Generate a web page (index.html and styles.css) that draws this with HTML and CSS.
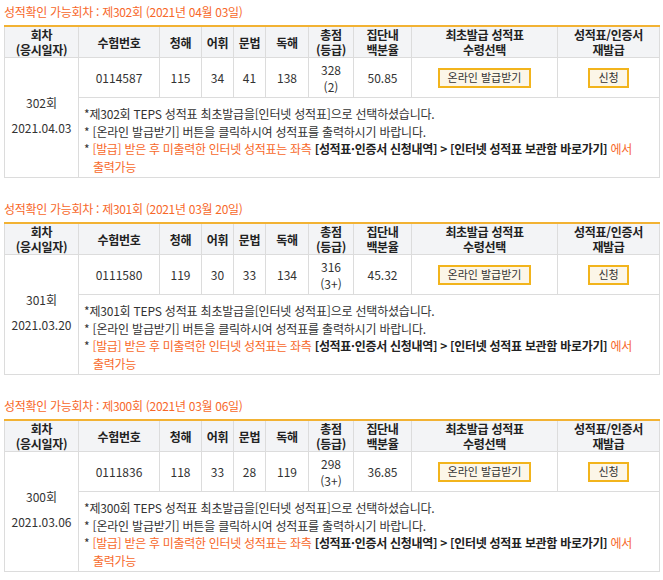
FILE: index.html
```html
<!DOCTYPE html>
<html lang="ko">
<head>
<meta charset="utf-8">
<link rel="stylesheet" href="styles.css">
</head>
<body>
<section class="block">
  <h2 class="round-title">성적확인 가능회차 : 제302회 (2021년 04월 03일)</h2>
  <table class="score">
    <colgroup>
      <col class="c-round"><col class="c-num"><col class="c-s1"><col class="c-s2"><col class="c-s3"><col class="c-s4"><col class="c-total"><col class="c-pct"><col class="c-first"><col class="c-re">
    </colgroup>
    <thead>
      <tr>
        <th>회차<br>(응시일자)</th><th>수험번호</th><th>청해</th><th>어휘</th><th>문법</th><th>독해</th><th>총점<br>(등급)</th><th>집단내<br>백분율</th><th>최초발급 성적표<br>수령선택</th><th>성적표/인증서<br>재발급</th>
      </tr>
    </thead>
    <tbody>
      <tr class="data">
        <td rowspan="2" class="round">302회<br>2021.04.03</td>
        <td>0114587</td><td>115</td><td>34</td><td>41</td><td>138</td><td>328<br>(2)</td><td>50.85</td>
        <td><button class="btn">온라인 발급받기</button></td>
        <td><button class="btn">신청</button></td>
      </tr>
      <tr class="note-row">
        <td colspan="9" class="notes">
          <p>*제302회 TEPS 성적표 최초발급을[인터넷 성적표]으로 선택하셨습니다.</p>
          <p>* [온라인 발급받기] 버튼을 클릭하시여 성적표를 출력하시기 바랍니다.</p>
          <p class="hang">* <span class="warn">[발급] 받은 후 미출력한 인터넷 성적표는 좌측 </span><b>[성적표·인증서 신청내역] &gt; [인터넷 성적표 보관함 바로가기]</b><span class="warn"> 에서 <span class="nw">출력가능</span></span></p>
        </td>
      </tr>
    </tbody>
  </table>
</section>
<section class="block">
  <h2 class="round-title">성적확인 가능회차 : 제301회 (2021년 03월 20일)</h2>
  <table class="score">
    <colgroup>
      <col class="c-round"><col class="c-num"><col class="c-s1"><col class="c-s2"><col class="c-s3"><col class="c-s4"><col class="c-total"><col class="c-pct"><col class="c-first"><col class="c-re">
    </colgroup>
    <thead>
      <tr>
        <th>회차<br>(응시일자)</th><th>수험번호</th><th>청해</th><th>어휘</th><th>문법</th><th>독해</th><th>총점<br>(등급)</th><th>집단내<br>백분율</th><th>최초발급 성적표<br>수령선택</th><th>성적표/인증서<br>재발급</th>
      </tr>
    </thead>
    <tbody>
      <tr class="data">
        <td rowspan="2" class="round">301회<br>2021.03.20</td>
        <td>0111580</td><td>119</td><td>30</td><td>33</td><td>134</td><td>316<br>(3+)</td><td>45.32</td>
        <td><button class="btn">온라인 발급받기</button></td>
        <td><button class="btn">신청</button></td>
      </tr>
      <tr class="note-row">
        <td colspan="9" class="notes">
          <p>*제301회 TEPS 성적표 최초발급을[인터넷 성적표]으로 선택하셨습니다.</p>
          <p>* [온라인 발급받기] 버튼을 클릭하시여 성적표를 출력하시기 바랍니다.</p>
          <p class="hang">* <span class="warn">[발급] 받은 후 미출력한 인터넷 성적표는 좌측 </span><b>[성적표·인증서 신청내역] &gt; [인터넷 성적표 보관함 바로가기]</b><span class="warn"> 에서 <span class="nw">출력가능</span></span></p>
        </td>
      </tr>
    </tbody>
  </table>
</section>
<section class="block">
  <h2 class="round-title">성적확인 가능회차 : 제300회 (2021년 03월 06일)</h2>
  <table class="score">
    <colgroup>
      <col class="c-round"><col class="c-num"><col class="c-s1"><col class="c-s2"><col class="c-s3"><col class="c-s4"><col class="c-total"><col class="c-pct"><col class="c-first"><col class="c-re">
    </colgroup>
    <thead>
      <tr>
        <th>회차<br>(응시일자)</th><th>수험번호</th><th>청해</th><th>어휘</th><th>문법</th><th>독해</th><th>총점<br>(등급)</th><th>집단내<br>백분율</th><th>최초발급 성적표<br>수령선택</th><th>성적표/인증서<br>재발급</th>
      </tr>
    </thead>
    <tbody>
      <tr class="data">
        <td rowspan="2" class="round">300회<br>2021.03.06</td>
        <td>0111836</td><td>118</td><td>33</td><td>28</td><td>119</td><td>298<br>(3+)</td><td>36.85</td>
        <td><button class="btn">온라인 발급받기</button></td>
        <td><button class="btn">신청</button></td>
      </tr>
      <tr class="note-row">
        <td colspan="9" class="notes">
          <p>*제300회 TEPS 성적표 최초발급을[인터넷 성적표]으로 선택하셨습니다.</p>
          <p>* [온라인 발급받기] 버튼을 클릭하시여 성적표를 출력하시기 바랍니다.</p>
          <p class="hang">* <span class="warn">[발급] 받은 후 미출력한 인터넷 성적표는 좌측 </span><b>[성적표·인증서 신청내역] &gt; [인터넷 성적표 보관함 바로가기]</b><span class="warn"> 에서 <span class="nw">출력가능</span></span></p>
        </td>
      </tr>
    </tbody>
  </table>
</section>
</body>
</html>
```
FILE: styles.css
```css
html, body {
  margin: 0;
  padding: 0;
  background: #fff;
}
body {
  padding: 4px 4px 0 4px;
  font-family: "Noto Sans CJK KR", "Noto Sans", sans-serif;
  font-size: 12px;
  line-height: 16px;
  color: #333;
}
.block {
  margin-bottom: 23px;
}
.round-title {
  margin: 0 0 5px 0;
  font-size: 12px;
  font-weight: normal;
  line-height: 16px;
  height: 16px;
  color: #f7682a;
  letter-spacing: -0.3px;
}
.score {
  width: 655px;
  border-collapse: collapse;
  table-layout: fixed;
  border-top: 2px solid #f2b233;
}
.c-round { width: 74px; }
.c-num { width: 81px; }
.c-s1 { width: 42px; }
.c-s2 { width: 32px; }
.c-s3 { width: 32px; }
.c-s4 { width: 43px; }
.c-total { width: 45px; }
.c-pct { width: 58px; }
.c-first { width: 146px; }
.c-re { width: 102px; }
.score th {
  background: #f3f4f6;
  color: #222;
  font-weight: bold;
  height: 30px;
  padding: 0;
  line-height: 15px;
  border: 1px solid #dcdcdc;
  border-top: none;
  text-align: center;
  letter-spacing: -0.3px;
}
.score td {
  border: 1px solid #dcdcdc;
  text-align: center;
  padding: 0;
  line-height: 17px;
}
.score tr.data td {
  height: 39px;
}
.score td.round {
  line-height: 25px;
  padding-bottom: 6px;
}
.btn {
  font-family: inherit;
  font-size: 11px;
  color: #333;
  background: #fcf6e8;
  border: 2px solid #f2b41c;
  height: 20px;
  padding: 0 8px;
  line-height: 15px;
  cursor: pointer;
  vertical-align: middle;
}
.score tr.note-row td.notes {
  text-align: left;
  padding: 7px 6px 2px 5px;
  line-height: 17.5px;
  letter-spacing: -0.2px;
  vertical-align: top;
}
.notes p {
  margin: 0;
  line-height: 17.5px;
}
.notes p.hang {
  padding-left: 9px;
  text-indent: -9px;
  letter-spacing: -0.3px;
}
.nw {
  white-space: nowrap;
}
.warn {
  color: #f7682a;
}
.notes b {
  color: #222;
}
```
